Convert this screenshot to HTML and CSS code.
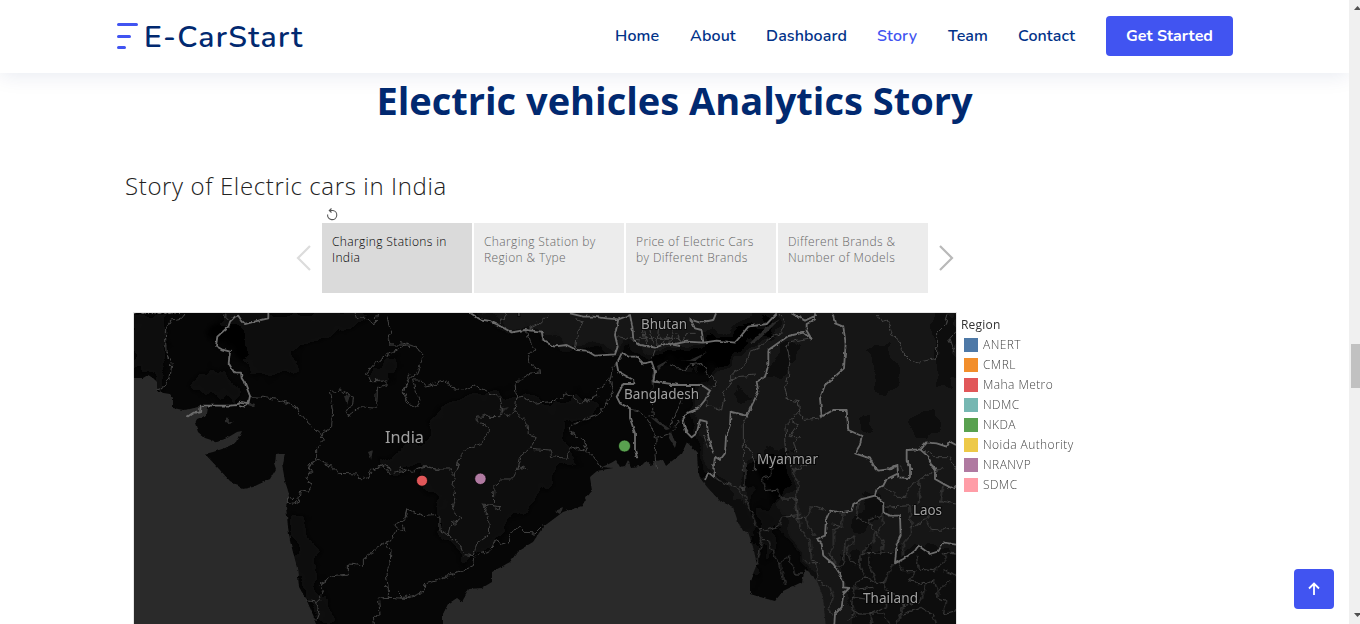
FILE: index.html
```html
<!DOCTYPE html>
<html lang="en">
<head>
<meta charset="utf-8">
<title>E-CarStart</title>
<link rel="stylesheet" href="styles.css">
</head>
<body>
<div class="window">
  <div class="page">
    <header class="header">
      <a class="logo">
        <svg class="logo-mark" width="22" height="28" viewBox="0 0 22 28"><path d="M1.500 2.500H19.500M1.500 14.500H12.500M1.500 25.500H7.500"/></svg>
        <span class="logo-text">E-CarStart</span>
      </a>
      <nav class="nav">
        <a class="nav-home">Home</a>
        <a class="nav-about">About</a>
        <a class="nav-dashboard">Dashboard</a>
        <a class="nav-story active">Story</a>
        <a class="nav-team">Team</a>
        <a class="nav-contact">Contact</a>
        <a class="cta">Get Started</a>
      </nav>
    </header>
    <main class="main">
      <h1 class="title">Electric vehicles Analytics Story</h1>
      <section class="story">
        <h2 class="story-title">Story of Electric cars in India</h2>
        <div class="revert"><svg width="14" height="14" viewBox="0 0 14 14"><path d="M5 2.500H8A4.600 4.600 0 1 1 2.600 6.500M6.500.5 4.300 2.500 6.500 4.500"/></svg></div>
        <div class="points">
          <svg class="arrow arrow-prev" width="16" height="28" viewBox="0 0 16 28"><path d="M14 2 2 14 14 26"/></svg>
          <div class="cards">
            <div class="card current">Charging Stations in<br>India</div>
            <div class="card">Charging Station by<br>Region &amp; Type</div>
            <div class="card">Price of Electric Cars<br>by Different Brands</div>
            <div class="card">Different Brands &amp;<br>Number of Models</div>
          </div>
          <svg class="arrow" width="16" height="28" viewBox="0 0 16 28"><path d="M2 2 14 14 2 26"/></svg>
        </div>
        <div class="viz">
          <svg class="map" width="822" height="311" viewBox="134 313 822 311">
            <defs>
              <filter id="rough" filterUnits="userSpaceOnUse" x="134" y="313" width="822" height="311">
                <feTurbulence type="fractalNoise" baseFrequency=".18" numOctaves="2" seed="4"/>
                <feDisplacementMap in="SourceGraphic" scale="6" xChannelSelector="R" yChannelSelector="G"/>
              </filter>
              <filter id="coast" filterUnits="userSpaceOnUse" x="124" y="303" width="842" height="331">
                <feTurbulence type="fractalNoise" baseFrequency=".2" numOctaves="2" seed="9"/>
                <feDisplacementMap in="SourceGraphic" scale="3" xChannelSelector="R" yChannelSelector="G"/>
              </filter>
              <filter id="soft" filterUnits="userSpaceOnUse" x="114" y="293" width="862" height="351">
                <feTurbulence type="fractalNoise" baseFrequency=".05" numOctaves="2" seed="6" result="n"/>
                <feGaussianBlur in="SourceGraphic" stdDeviation="3.500" result="b"/>
                <feDisplacementMap in="b" in2="n" scale="26" xChannelSelector="R" yChannelSelector="G"/>
              </filter>
            </defs>
            <rect class="land" x="134" y="313" width="822" height="311"/>
            <g class="relief" filter="url(#soft)">
              <path d="M638 293H990V660H830L812 575 790 540 775 500 765 455 745 470 752 535 735 510 708 480 700 440 690 400 720 370 668 362 640 345 600 352 540 335 480 315 465 293Z"/>
              <path class="low" d="M134 313H168L164 350 170 368 158 390 145 370 134 372ZM215 330 235 340 250 375 300 372 296 350 340 330 380 313H300L225 315ZM205 365 230 370 240 398 210 400 190 385Z"/>
              <path class="low" d="M290 510 305 515 312 545 318 590 335 620H318L300 580 291 530ZM375 368 398 360 392 378 378 382ZM440 410 470 395 520 392 560 405 590 395 600 410 560 430 580 455 555 470 530 500 500 535 460 560 442 540 438 500 425 490 418 460Z"/>
              <path class="mid" d="M450 500 475 470 482 425 500 420 535 445 558 440 545 475 520 500 510 520 495 545 465 552ZM375 460 400 450 425 440 450 443 420 465 395 472ZM480 425 440 440 452 415 475 408Z"/>
              <path class="pit" d="M213 325 240 322 250 340 240 362 228 348 215 346ZM762 445 790 450 792 480 780 500 763 490ZM655 353 700 345 728 330 780 313 772 335 735 350 724 370 690 362 655 365Z"/>
              <path class="mid" d="M858 505 880 490 885 510 866 530 850 530ZM868 350 888 345 900 385 888 400 868 375ZM930 313H956V390L935 385ZM858 420 872 412 870 430 860 435ZM765 375 785 340 795 345 785 380ZM900 420 930 405 945 430 920 440ZM735 385 750 390 747 405 736 402Z"/>
              <path class="low" d="M840 560 900 545 970 550V660H865L850 600ZM762 500 780 520 770 560 758 540ZM690 480 715 470 740 500 760 570 752 590 745 540Z"/>
            </g>
            <g class="sea" filter="url(#coast)">
              <path d="M120 378 143 378 148 375 153 378 157 382V392L170 394 173 398V408L183 410 190 409 198 407 208 407 207 415 197 419 195 423 198 432 205 438 217 442 227 438 237 432 242 431 237 442 225 448 213 452 205 454 219 469 230 481 243 489 253 487 270 479 276 469 274 463 282 463 283 470 285 481 289 494 286 506 288 527 290 541 297 567 299 587 307 601 317 624V640H120Z"/>
              <path d="M443 640V614L448 604 457 598 462 602 469 589 482 588 492 582V572L510 562 518 551 533 542 543 527 563 512 582 506 587 497 592 491 590 477 597 471 613 468 602 467 611 463 616 460 620 467 625 466 628 460 631 467 641 466 646 461 652 466 654 461 663 460 666 466 672 461 682 453 687 442 697 453 698 470 700 478 707 487 720 501 733 507 737 519 742 531 748 532 753 547 757 564 750 581V594L767 599 775 601 783 591 802 582 805 569 817 581 823 597 827 640Z"/>
              <path d="M276 454 285 453 283 465 275 465ZM226 417 230 422 234 421 230 424 226 422ZM368 452 373 450 371 459ZM344 396 350 395 347 405ZM555 511 563 508 560 514ZM499 409 508 407 502 413ZM249 402 255 404 254 407 248 405ZM750 343 765 328 780 319 768 331 755 343ZM681 360H690L707 352 695 361ZM650 417 656 419 670 429 666 430ZM670 430 676 444 675 448 669 438ZM657 366 668 360 658 371ZM654 366 656 372 653 390 651 380Z"/>
            </g>
            <g class="states" filter="url(#rough)">
              <g transform="translate(130 310) scale(.33333)">
                <path d="M165 12 155 25 122 30 106 60 108 125 126 160 120 200 100 235 80 242M278 10 298 30M360 260 400 262 440 268 480 280 495 290 525 330 570 370 580 390 560 415 560 450 540 465 538 480M575 372 605 350 608 300 598 245 630 240 670 260 668 285 645 300 655 320 690 290 740 295 742 235 768 225V210L720 212 710 190 730 165 820 105 840 110M820 105 780 105 775 85 785 70 770 20M675 10 680 28 700 18 715 35 738 42 742 12M840 190 820 245 840 280M560 450 590 460 620 480M725 480 770 463 780 480"/>
              </g>
              <g transform="translate(130 464) scale(.33333)">
                <path d="M535 0 545 20 525 45 545 60 535 85 512 80 505 112 485 118 468 112 478 100 500 105M580 0 610 15 625 28 680 30 695 48 715 40 725 15 760 5 780 30 840 18M830 130 827 165 800 180 795 205 780 230 765 235 740 250 725 270 700 285 700 305 655 300 655 330 610 335 570 360 580 385 565 415 530 410M765 235 783 260 780 300 768 330 775 370 765 370M775 370V400L840 404M780 400 745 402 750 450 730 460 733 480M560 415 568 450 560 470M800 195 825 200 820 185M805 385 820 400 840 390"/>
              </g>
              <g transform="translate(400 310) scale(.33333)">
                <path d="M0 98 50 110 72 135 50 190 30 205 10 240 20 280 50 295 60 270 45 240 38 210 60 210 80 228 140 210 155 235 190 240 225 225 270 250 300 262 305 295 300 320 230 318 232 335 265 350 265 368 245 400 205 415 180 440 170 480M380 65 390 100 405 120 385 130 390 160 425 185 390 190 345 220 350 265 345 305 330 315 310 310M350 265 370 262 400 280 450 275 480 265 500 250 540 278 590 260 590 240 630 210 640 170 665 140M630 210 640 240 620 280 600 310 560 325 505 350 510 365 550 390 560 420 590 450 605 475M345 305 380 340 385 370 408 385 390 415 450 420 455 440 500 445 515 410 560 425M390 415 360 440 350 480 375 470M300 42 320 12M380 60 410 45 445 15M525 120 535 60 550 35 525 25M0 470 20 480M50 480 80 470 120 480M765 120 755 150M650 80 720 90M730 60 740 100M750 60 760 105M775 60 770 105M800 70 790 105M820 60 810 110M720 85 840 85M690 297 725 305 750 340 768 385 765 440 770 480M752 240 760 315 740 320M770 385 810 370 840 330"/>
              </g>
              <g transform="translate(400 464) scale(.33333)">
                <path d="M0 18 40 22 70 8 110 15 150 15 165 32 175 0M165 32 158 65 165 100 155 138 182 160 150 185 145 212 120 200 120 165 100 152 70 155 20 135 15 160 0 175M145 212 175 235 192 272 225 275 220 305 180 322 125 345 75 360 70 385 30 400 0 400M130 340 155 325 160 340M220 270 230 240 270 210 265 160 248 120 300 128 297 138 280 125 282 65 305 45 335 45 355 5 380 18M230 272 270 260 285 228 305 240 325 235 330 208 360 188 375 205 405 207 430 182"/>
              </g>
              <g transform="translate(670 310) scale(.33333)">
                <path d="M330 12 345 35 335 70 295 85 265 115 240 125 230 160 205 180 185 190V215L165 240 155 300 110 285 112 250M185 210 205 200 255 195M415 85 360 95 350 110 360 150 355 200 345 240 355 270 385 275 390 310 405 328 440 325 460 315M0 165 40 180 60 165 100 160 110 190 140 215 120 245M20 70 35 100 50 70 80 70M390 300 360 335 345 350 350 430 370 480M365 335 385 345 360 380 390 380 370 395 380 430M240 300 220 340 220 480M225 395 245 430 255 480M620 12 635 35 655 30 670 80 690 95 700 130 730 160 800 145 800 70 825 45 835 12M858 65 840 85 855 130M750 410 790 440 840 440 858 480M40 260 0 350M100 375 115 410"/>
              </g>
              <g transform="translate(670 464) scale(.33333)">
                <path d="M225 0 225 75 200 70 140 45 130 25M200 70 230 110 245 150 265 195 275 230 262 305M370 480 M370 20 410 0M305 5 300 35 275 45 285 80 325 75 335 105 380 105 385 155 335 160 325 185 290 200 265 195M370 20 385 60 375 110 390 190 420 235 425 290 440 295 445 350 480 370M275 230 295 230 315 280 330 300 355 275 375 330 400 330M330 300 345 365M380 160 410 160 425 125 465 140M410 160 415 190 435 215M485 180 520 190M520 145 515 185 490 200 490 250 475 270 490 285 500 310 520 300 525 235 550 215 550 240 530 250 540 290 570 310 570 275 575 270 605 235 620 205 595 180 560 160 565 115M620 205 640 180 640 150 600 165 595 180M575 270 670 265M620 205 640 235 635 265M640 60 650 75 670 85 680 100 710 100 715 70 745 45M640 130 720 125 725 210 700 240V275M720 190 770 165 780 145M745 45 750 110 730 125M750 45 820 10M820 60 810 110 858 120M770 170 785 200 858 195M570 310 590 340 560 350 545 420 555 455 530 470M590 340 620 360 640 355 655 385 645 430 600 450 605 480M600 275 600 310 620 360M655 385 690 395 700 425 680 480M640 355 670 300M700 425 750 415 765 360 720 350 735 320 700 320 680 290M765 360 790 350 805 380 800 400 830 410 820 450 858 440M740 275 745 315 790 320 830 290 820 265 858 270M820 320 858 335M805 380 840 350M480 370 490 400 475 435 490 455M545 400 590 405M545 440 570 450 640 450 660 480M700 450 750 430 790 455 800 480M560 375 610 370M445 295 430 300 405 290M690 0 700 20"/>
              </g>
            </g>
            <g class="borders" filter="url(#coast)">
              <g transform="translate(130 310) scale(.33333)">
                <path d="M415 5V25L385 32 345 42 335 32 325 17 315 20 300 35 295 50 262 80 258 108 275 118 300 125 296 160 312 187 333 188 335 205 345 220 360 258 355 280 330 275 325 285 300 287H212L210 308H190L172 320M355 270 350 285 340 292 328 288"/>
              </g>
              <g transform="translate(400 310) scale(.33333)">
                <path d="M210 8 240 28 270 33 300 48 335 67 375 60 425 65 430 90 460 110 500 105 530 120 560 122 585 137 645 133 653 110 645 75 655 28 620 25 580 20 550 20 510 10M655 28 690 15 697 50 700 90 720 105 765 113 800 100 840 108M665 125 685 140 710 140 730 160 755 155 765 185 760 215 840 225M665 130 650 160 655 185 700 210 700 222 670 222 650 260 660 280 690 295 690 325 705 370 705 420 712 445"/>
              </g>
              <g transform="translate(670 310) scale(.33333)">
                <path d="M60 28 90 38 130 30 138 10M60 25 75 55 95 60 100 100M0 105 50 95 100 98 140 92 195 98 215 75 235 50 290 42 320 10M365 10 405 32 440 15M435 10 435 28 410 42 410 62 425 87 400 68 355 78 330 95 295 120 295 165 285 200 260 215 265 245 230 318 182 305 180 345 168 380 165 430 150 450 135 440 130 480M0 225 95 225 120 242 105 270 85 295 50 310 38 330 48 365 65 382 80 370 90 330 110 335 115 380 130 430M487 10 495 40 520 50 527 100 522 175 500 195 465 225 450 265 455 320 490 300 530 300 535 360 575 378 570 405 555 430 600 445 618 480M858 405 840 395 830 410 800 400 768 397 750 418 710 420 710 450 725 480M750 418 775 440 785 465 800 480M650 480 680 465"/>
              </g>
              <g transform="translate(670 464) scale(.33333)">
                <path d="M130 0 133 40 115 25 105 48M605 0 625 20 665 15 680 5M682 0 685 40 720 42V0M685 28 650 45 640 65 620 75 615 95 575 105 550 120 545 140 510 145 480 140 468 165 465 215 440 225 455 240 460 275 490 300 510 330 520 355 520 370 538 372 520 390 515 430 495 450 493 480M615 95 640 115 640 145 660 155 690 155 692 215 680 240 675 298 700 285 735 260 745 245 780 270 805 262 820 235 858 242M780 0 795 20 795 45 825 62 850 75 858 65"/>
              </g>
            </g>
            <g class="labels">
              <text class="dim" x="133" y="314" textLength="48" lengthAdjust="spacingAndGlyphs">Pakistan</text>
              <text class="dim" x="500" y="312" textLength="36" lengthAdjust="spacingAndGlyphs">Nepal</text>
              <text x="641" y="329" textLength="46" lengthAdjust="spacingAndGlyphs">Bhutan</text>
              <text x="624" y="399" textLength="75" lengthAdjust="spacingAndGlyphs">Bangladesh</text>
              <text class="big" x="385" y="443" textLength="39" lengthAdjust="spacingAndGlyphs">India</text>
              <text x="757" y="464" textLength="61" lengthAdjust="spacingAndGlyphs">Myanmar</text>
              <text x="913" y="515" textLength="29" lengthAdjust="spacingAndGlyphs">Laos</text>
              <text x="863" y="603" textLength="55" lengthAdjust="spacingAndGlyphs">Thailand</text>
            </g>
            <g class="marks">
              <circle class="red" cx="422" cy="480.700" r="5.500"/>
              <circle class="purple" cx="480.400" cy="478.800" r="5.700"/>
              <circle class="green" cx="624.500" cy="446" r="6"/>
            </g>
          </svg>
          <aside class="legend">
            <div class="legend-title">Region</div>
            <div class="item"><i class="swatch anert"></i>ANERT</div>
            <div class="item"><i class="swatch cmrl"></i>CMRL</div>
            <div class="item"><i class="swatch maha"></i>Maha Metro</div>
            <div class="item"><i class="swatch ndmc"></i>NDMC</div>
            <div class="item"><i class="swatch nkda"></i>NKDA</div>
            <div class="item"><i class="swatch noida"></i>Noida Authority</div>
            <div class="item"><i class="swatch nranvp"></i>NRANVP</div>
            <div class="item"><i class="swatch sdmc"></i>SDMC</div>
          </aside>
        </div>
      </section>
    </main>
    <a class="to-top"><svg width="14" height="14" viewBox="0 0 14 14"><path d="M7 13V2M2 6.500 7 1.500 12 6.500"/></svg></a>
  </div>
  <div class="scrollbar">
    <svg class="tick" width="7" height="4" viewBox="0 0 7 4"><path d="M0 4 3.500 0 7 4Z"/></svg>
    <div class="thumb"></div>
    <svg class="tick" width="7" height="4" viewBox="0 0 7 4"><path d="M0 0H7L3.500 4Z"/></svg>
  </div>
</div>
</body>
</html>
```
FILE: styles.css
```css
* { box-sizing: border-box; }
body { margin: 0; overflow: hidden; background: #fff; font-family: "Open Sans", "Noto Sans", sans-serif; }
h1, h2 { margin: 0; }
.window { display: grid; grid-template-columns: 1349px 11px; height: 624px; overflow: hidden; }
.page { position: relative; height: 624px; overflow: hidden; background: #fff; }
.header { display: flex; align-items: center; justify-content: space-between; height: 73px; padding: 0 116px 1px; background: #fff; box-shadow: 0 2px 20px rgba(1, 41, 112, .1); }
.logo { display: flex; align-items: center; gap: 5px; height: 73px; padding-left: 1px; }
.logo-mark { fill: none; stroke: #4154f1; stroke-width: 3; stroke-linecap: round; }
.logo-text { padding-top: 3px; color: #012970; font: 600 30px/40px Nunito, Lato, sans-serif; letter-spacing: 1.35px; white-space: nowrap; }
.nav { display: flex; align-items: center; gap: 30px; color: #013289; font: 600 16px/24px Nunito, "Open Sans", sans-serif; letter-spacing: .12px; white-space: nowrap; }
.nav-home { width: 45px; }
.nav-about { width: 46px; }
.nav-dashboard { width: 81px; }
.nav-story { width: 41px; }
.nav-team { width: 40px; }
.nav-contact { width: 58px; }
.active { color: #4154f1; }
.cta { width: 127px; height: 40px; border-radius: 4px; background: #4154f1; color: #fff; font-weight: 700; line-height: 40px; letter-spacing: 0; text-align: center; }
.title { height: 58px; padding-top: 4px; color: #012970; font: 700 38px/46px "Open Sans", sans-serif; text-align: center; white-space: nowrap; }
.story { padding: 38px 0 0 125px; }
.story-title { height: 37px; color: #222; font: 300 24px/34px "Open Sans", sans-serif; font-weight: 330; letter-spacing: .63px; white-space: nowrap; }
.revert { display: flex; height: 17px; padding: 2px 0 0 200px; }
.revert path { fill: none; stroke: #555; stroke-width: 1.1; }
.points { display: flex; align-items: center; gap: 10px; padding-left: 171px; }
.arrow { fill: none; stroke: #b9b9b9; stroke-width: 2.2; }
.arrow-prev { stroke: #dcdcdc; }
.cards { display: flex; gap: 2px; }
.card { width: 150px; height: 70px; padding: 11px 10px; background: #ececec; color: #666; font-size: 12px; line-height: 16px; white-space: nowrap; font-weight: 300; letter-spacing: .38px; }
.current { background: #dadada; color: #000; }
.viz { display: flex; gap: 5px; padding: 20px 0 0 9px; }
.map { display: block; outline: 1px solid #e6e6e6; }
.land { fill: #060606; }
.relief { fill: #151515; }
.relief .low { fill: #0c0c0c; }
.relief .mid { fill: #111; }
.relief .pit { fill: #050505; }
.sea { fill: #2b2b2b; }
.states { fill: none; stroke: #444; stroke-width: 3; }
.borders { fill: none; stroke: #6c6c6c; stroke-width: 5.5; stroke-linejoin: round; }
.labels { fill: #a0a0a0; stroke: #080808; stroke-width: 2px; paint-order: stroke; font: 400 14px "Noto Sans", sans-serif; }
.labels .big { font-size: 17px; }
.labels .dim { fill: #555; }
.marks { stroke: #000; stroke-width: .7; }
.red { fill: #e15759; }
.purple { fill: #b07aa1; }
.green { fill: #59a14f; }
.legend { padding-top: 2px; color: #444; font-weight: 300; font-size: 12px; line-height: 20px; white-space: nowrap; letter-spacing: .42px; }
.legend-title { color: #333; font-weight: 400; letter-spacing: .2px; }
.item { display: flex; align-items: center; gap: 5px; padding-left: 3px; }
.swatch { width: 14px; height: 14px; }
.anert { background: #4e79a7; }
.cmrl { background: #f28e2b; }
.maha { background: #e15759; }
.ndmc { background: #76b7b2; }
.nkda { background: #59a14f; }
.noida { background: #edc948; }
.nranvp { background: #b07aa1; }
.sdmc { background: #ff9da7; }
.to-top { position: absolute; right: 15px; bottom: 15px; display: flex; align-items: center; justify-content: center; width: 40px; height: 40px; border-radius: 4px; background: #4154f1; }
.to-top path { fill: none; stroke: #fff; stroke-width: 1.8; }
.scrollbar { display: flex; flex-direction: column; justify-content: space-between; height: 624px; padding: 6px 0 7px 2px; background: #f0f0f0; overflow: hidden; }
.tick { margin-left: 3px; fill: #505050; }
.thumb { width: 9px; height: 44px; margin-top: 108px; background: #c1c1c1; }
```
